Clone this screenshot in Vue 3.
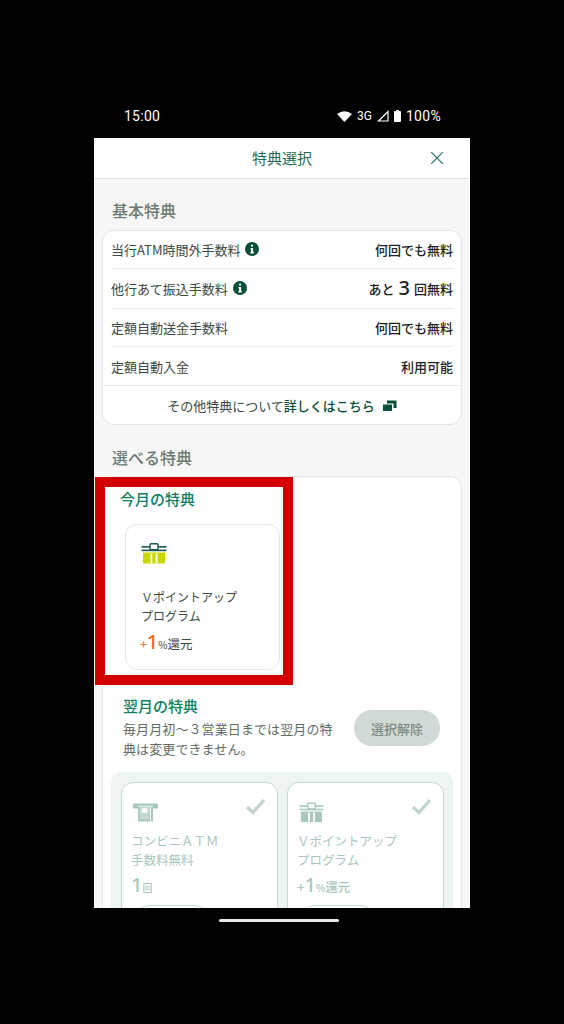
<script setup>
const rows = [
  { label: '当行ATM時間外手数料', info: true, value: '何回でも無料' },
  { label: '他行あて振込手数料', info: true, count: true },
  { label: '定額自動送金手数料', value: '何回でも無料' },
  { label: '定額自動入金', value: '利用可能' },
]
</script>

<template>
  <div class="page">
    <div class="status">
      <span class="time">15:00</span>
      <div class="status-right">
        <svg width="15" height="11" viewBox="0 0 15 11"><path d="M0 3 Q7.5 -2.5 15 3 L7.5 11 Z" fill="#fff"/></svg>
        <span class="net">3G</span>
        <svg width="12" height="12" viewBox="0 0 12 12"><path d="M11 1.5 V11 H1.5 Z" fill="none" stroke="#fff" stroke-width="1.2"/></svg>
        <svg width="7" height="12" viewBox="0 0 7 12"><path d="M2 0 H5 V1 H6.2 Q7 1 7 2 V11 Q7 12 6 12 H1 Q0 12 0 11 V2 Q0 1 .8 1 H2 Z" fill="#fff"/></svg>
        <span class="pct">100%</span>
      </div>
    </div>

    <main class="screen">
      <header class="head">
        <h1>特典選択</h1>
        <svg class="close" width="14" height="14" viewBox="0 0 14 14"><path d="M1.2 1.2 L12.8 12.8 M12.8 1.2 L1.2 12.8" stroke="#1f6b54" stroke-width="1.1" fill="none"/></svg>
      </header>

      <div class="body">
        <h2 class="sec first">基本特典</h2>
        <section class="card basic">
          <div class="rows">
            <div v-for="r in rows" :key="r.label" class="row" :class="{ tall: r.count }">
              <span class="label">{{ r.label }}
                <svg v-if="r.info" class="info" width="14" height="14" viewBox="0 0 14 14"><circle cx="7" cy="7" r="7" fill="#0b4f3a"/><rect x="6" y="2.6" width="2.1" height="2.1" rx="1" fill="#fff"/><path d="M5.5 6 H8.1 V10.2 H9 V11.4 H5.3 V10.2 H6.1 V7.2 H5.5 Z" fill="#fff"/></svg>
              </span>
              <span v-if="r.count" class="value">あと<b class="big">3</b>回無料</span>
              <span v-else class="value">{{ r.value }}</span>
            </div>
          </div>
          <div class="more">
            その他特典について<span class="link">詳しくはこちら</span>
            <svg class="ext" width="14" height="11" viewBox="0 0 14 11"><path d="M0 4.5 H9 V11 H0 Z" fill="#0b4f3a"/><path d="M4 0.5 H13.5 V8 H10.5 V3.5 H4 Z" fill="#0b4f3a"/></svg>
          </div>
        </section>

        <h2 class="sec second">選べる特典</h2>
        <section class="card choose">
          <div class="now">
            <h3 class="green">今月の特典</h3>
            <div class="tile active">
              <svg class="gift" width="26" height="21" viewBox="0 0 26 21">
                <path d="M2 9.5 H24 V19.5 Q24 20.5 23 20.5 H3 Q2 20.5 2 19.5 Z" fill="#c8d800"/>
                <rect x="9.5" y="10.5" width="1.8" height="10" fill="#fff"/>
                <rect x="14.7" y="10.5" width="1.8" height="10" fill="#fff"/>
                <rect x="0.5" y="3" width="8" height="1.6" fill="#1b5a45"/>
                <rect x="0.5" y="6.6" width="25" height="1.6" fill="#1b5a45"/>
                <rect x="17.5" y="3" width="8" height="1.6" fill="#1b5a45"/>
                <rect x="9" y="0.8" width="8" height="6" rx="1" fill="none" stroke="#1b5a45" stroke-width="1.5"/>
              </svg>
              <p class="name">Ｖポイントアップ<br>プログラム</p>
              <p class="rate"><span class="plus">+</span><span class="num">1</span><span class="small">%</span>還元</p>
            </div>
          </div>

          <div class="next">
            <div class="next-head">
              <div class="next-text">
                <h3 class="green">翌月の特典</h3>
                <p>毎月月初～３営業日までは翌月の特典は変更できません。</p>
              </div>
              <div class="clear">選択解除</div>
            </div>

            <div class="panel">
              <div class="tile muted">
                <svg class="check" width="21" height="17" viewBox="0 0 21 17"><path d="M2 9 L8 14.5 L19 2" fill="none" stroke="#c3d5ce" stroke-width="3.4"/></svg>
                <svg class="m-icon" width="25" height="19" viewBox="0 0 25 19">
                  <path d="M1 0.5 H24 Q25 0.5 25 1.5 V4.5 Q25 5.5 24 5.5 H20 V18.5 H5 V5.5 H1 Q0 5.5 0 4.5 V1.5 Q0 .5 1 .5 Z" fill="#a9c7bc"/>
                  <rect x="5" y="2.6" width="15" height="1.2" fill="#fff" opacity=".7"/>
                  <path d="M6.5 4 H16.5 V16.5 H6.5 Z" fill="#c4dad1"/>
                  <ellipse cx="11.5" cy="7.5" rx="3" ry="2.6" fill="#fff"/>
                  <rect x="17" y="4" width="1" height="14.5" fill="#fff"/>
                </svg>
                <p class="name">コンビニＡＴＭ<br>手数料無料</p>
                <p class="rate"><span class="num">1</span><span class="small">回</span></p>
                <div class="pick"></div>
              </div>
              <div class="tile muted">
                <svg class="check" width="21" height="17" viewBox="0 0 21 17"><path d="M2 9 L8 14.5 L19 2" fill="none" stroke="#c3d5ce" stroke-width="3.4"/></svg>
                <svg class="m-icon" width="25" height="21" viewBox="0 0 26 21">
                  <path d="M2 9.5 H24 V20.5 H2 Z" fill="#a9c7bc"/>
                  <rect x="9.5" y="10.5" width="1.8" height="10" fill="#fff"/>
                  <rect x="14.7" y="10.5" width="1.8" height="10" fill="#fff"/>
                  <rect x="0.5" y="3" width="8" height="1.6" fill="#a9c7bc"/>
                  <rect x="0.5" y="6.6" width="25" height="1.6" fill="#a9c7bc"/>
                  <rect x="17.5" y="3" width="8" height="1.6" fill="#a9c7bc"/>
                  <rect x="9" y="0.8" width="8" height="6" rx="1" fill="none" stroke="#a9c7bc" stroke-width="1.5"/>
                </svg>
                <p class="name">Ｖポイントアップ<br>プログラム</p>
                <p class="rate"><span class="plus">+</span><span class="num">1</span><span class="small">%</span>還元</p>
                <div class="pick"></div>
              </div>
            </div>
          </div>
        </section>
      </div>
    </main>

    <div class="nav"><span class="bar"></span></div>
    <div class="mark"></div>
  </div>
</template>

<style>
html, body { margin: 0; background: #000; }
</style>

<style scoped>
.page {
  position: relative;
  width: 564px;
  height: 1024px;
  padding-top: 100px;
  box-sizing: border-box;
  background: #000;
  font-family: "Noto Sans CJK JP", "Noto Sans", sans-serif;
  overflow: hidden;
}
p, h1, h2, h3 { margin: 0; }
.status {
  height: 38px;
  margin: 0 94px;
  padding: 0 29px 6px 30px;
  box-sizing: border-box;
  display: flex;
  align-items: center;
  justify-content: space-between;
  color: #fff;
  font-family: Roboto, sans-serif;
}
.time { font-size: 14px; font-weight: 400; letter-spacing: .25px; }
.status-right { display: flex; align-items: center; gap: 5px; }
.net { font-size: 12px; font-weight: 400; }
.pct { font-size: 14px; font-weight: 400; letter-spacing: .3px; }
.screen {
  width: 376px;
  height: 770px;
  margin: 0 94px;
  background: #f7f7f7;
  overflow: hidden;
}
.head {
  position: relative;
  height: 40px;
  background: #fff;
  border-bottom: 1px solid #dfe2e0;
  display: flex;
  align-items: center;
  justify-content: center;
}
.head h1 { font-size: 15px; line-height: 20px; margin-top: -1px; font-weight: 400; color: #1f6b54; }
.close { position: absolute; right: 26px; top: 13px; }
.body { padding: 0 7px 0 8px; }
.sec { font-size: 16px; font-weight: 500; color: #6d7b75; line-height: 22px; padding-left: 10px; }
.first { margin-top: 20px; }
.second { margin-top: 21px; }
.card {
  width: 360px;
  box-sizing: border-box;
  background: #fff;
  border: 1px solid #e3e7e5;
  border-radius: 12px;
}
.basic { margin-top: 9px; }
.rows { padding: 0 8px; }
.row {
  display: flex;
  justify-content: space-between;
  align-items: center;
  height: 38px;
  border-bottom: 1px solid #eceeed;
  box-sizing: border-box;
  font-size: 13px;
  color: #3b4a44;
}
.row.tall { height: 40px; }
.row:last-child { border-bottom: 0; }
.label { display: flex; align-items: center; gap: 5px; }
.info { margin-top: -2px; }
.value { font-weight: 500; color: #222; display: flex; align-items: center; }
.big { font-family: "Noto Sans", sans-serif; font-size: 20px; font-weight: 500; line-height: 20px; margin: 0 4px 2px; }
.more {
  height: 39px;
  border-top: 1px solid #e9ecea;
  box-sizing: border-box;
  display: flex;
  align-items: center;
  justify-content: center;
  font-size: 13px;
  color: #3b4a44;
}
.link { color: #0b4f3a; font-weight: 500; }
.ext { margin-left: 8px; }
.choose { margin-top: 8px; height: 470px; }
.green { font-size: 15px; font-weight: 500; color: #14805e; line-height: 20px; }
.now { padding: 12px 0 0 17px; }
.tile {
  position: relative;
  box-sizing: border-box;
  background: #fff;
  border-radius: 12px;
}
.active {
  width: 155px;
  height: 146px;
  margin: 15px 0 0 5px;
  border: 1px solid #e3e7e5;
  padding: 18px 15px 0;
}
.gift { display: block; }
.active .name { margin-top: 23px; font-size: 12px; line-height: 19px; color: #3b4a44; }
.rate { display: flex; align-items: baseline; font-size: 12.5px; color: #3b4a44; line-height: 24px; }
.active .rate { margin-top: 5px; margin-left: -1px; }
.active .plus { font-size: 12px; color: #f47a2b; font-weight: 500; }
.active .num { font-size: 20px; color: #f26a1b; font-weight: 500; font-family: "Noto Sans", sans-serif; letter-spacing: -1px; }
.small { font-size: 10px; margin: 0 0 0 1px; }
.next { padding: 0 8px; margin-top: 26px; }
.next-head { display: flex; justify-content: space-between; align-items: flex-start; padding: 0 13px 0 12px; }
.next-text { width: 212px; }
.next-text p { font-size: 13px; line-height: 20px; color: #5f6d67; letter-spacing: .1px; margin-top: 3px; }
.clear {
  width: 86px;
  height: 36px;
  margin-top: 14px;
  border-radius: 18px;
  background: #d2dad6;
  color: #7c8a84;
  font-size: 13px;
  font-weight: 500;
  display: flex;
  align-items: center;
  justify-content: center;
}
.panel {
  display: grid;
  grid-template-columns: 157px 157px;
  column-gap: 9px;
  margin-top: 13px;
  padding: 10px 9px 10px 10px;
  background: #eef4f1;
  border-radius: 10px;
}
.muted {
  height: 160px;
  border: 1px solid #c5d9d1;
  padding: 19px 9px 0;
  color: #a9c7bc;
}
.muted .m-icon { display: block; height: 21px; margin-left: 2px; }
.muted .name { margin-top: 8px; font-size: 12.5px; line-height: 19px; color: #a9c7bc; }
.muted .rate { color: #a9c7bc; margin-top: 4px; font-weight: 500; }
.muted .plus { font-size: 13px; }
.muted .num { font-size: 20px; font-family: "Noto Sans", sans-serif; letter-spacing: -1px; }
.check { position: absolute; right: 11px; top: 15px; }
.pick {
  position: absolute;
  left: 12px;
  top: 122px;
  width: 76px;
  height: 30px;
  border: 1px solid #c5d9d1;
  border-radius: 15px;
  box-sizing: border-box;
}
.nav { height: 24px; display: flex; justify-content: center; padding: 11px 6px 0 0; box-sizing: border-box; }
.bar { width: 120px; height: 3px; border-radius: 2px; background: #e8e8e8; }
.mark {
  position: absolute;
  left: 95px;
  top: 477px;
  width: 198px;
  height: 208px;
  border: 10px solid #d20000;
  box-sizing: border-box;
}
</style>
